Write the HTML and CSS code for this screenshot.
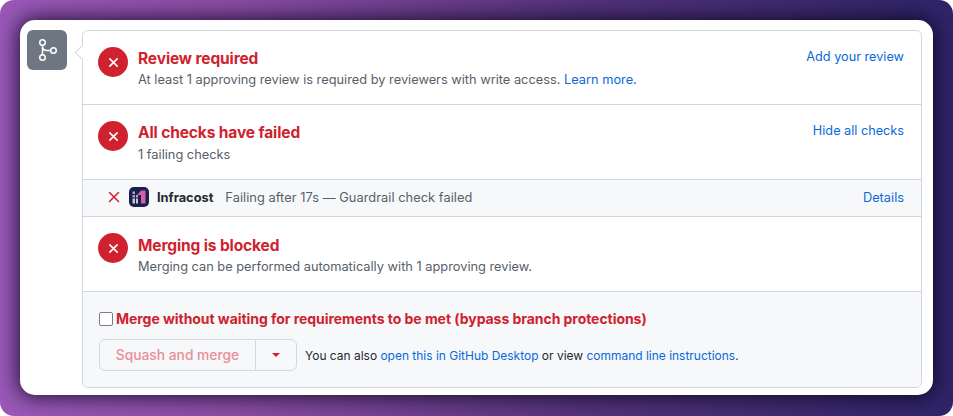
FILE: index.html
```html
<!DOCTYPE html>
<html lang="en">
<head>
<meta charset="utf-8">
<title>Merge box</title>
<link rel="stylesheet" href="styles.css">
</head>
<body>
<div class="frame">
  <div class="card">
    <div class="badge">
      <svg viewBox="0 0 24 24" width="24" height="24" fill="none" stroke="#fff" stroke-width="1.5"><circle cx="7.5" cy="4.5" r="2.75"/><circle cx="7.5" cy="19.5" r="2.75"/><circle cx="18.5" cy="12.5" r="2.75"/><path d="M7.5 7.25v9.5M7.5 8c0 3 2 4.5 4.5 4.5h3.75"/></svg>
    </div>
    <div class="box">
      <span class="caret"></span>
      <section class="row row-review">
        <span class="status"><svg viewBox="0 0 16 16" width="16" height="16"><path d="M3.5 3.5l9 9M12.5 3.5l-9 9" stroke="#fff" stroke-width="2" stroke-linecap="round"/></svg></span>
        <div class="info">
          <h3>Review required</h3>
          <p>At least 1 approving review is required by reviewers with write access. <a href="#">Learn more.</a></p>
        </div>
        <a class="side" href="#">Add your review</a>
      </section>
      <section class="row row-checks">
        <span class="status"><svg viewBox="0 0 16 16" width="16" height="16"><path d="M3.5 3.5l9 9M12.5 3.5l-9 9" stroke="#fff" stroke-width="2" stroke-linecap="round"/></svg></span>
        <div class="info">
          <h3>All checks have failed</h3>
          <p>1 failing checks</p>
        </div>
        <a class="side" href="#">Hide all checks</a>
      </section>
      <section class="check">
        <svg class="check-x" viewBox="0 0 12 12" width="12" height="12"><path d="M1.5 1.5l9 9M10.5 1.5l-9 9" stroke="#cf222e" stroke-width="1.5" stroke-linecap="round"/></svg>
        <svg class="logo" viewBox="0 0 20 20" width="20" height="20"><rect width="20" height="20" rx="5" fill="#1b1f4b"/><rect x="3.5" y="4.5" width="2.5" height="2.5" fill="#a9abc0"/><rect x="3.5" y="8" width="2.5" height="2.5" fill="#a9abc0"/><rect x="3.5" y="11.5" width="2.5" height="5" fill="#c6c7d6"/><rect x="7" y="8" width="2" height="2.5" fill="#a9abc0"/><rect x="7" y="11.5" width="2" height="5" fill="#c6c7d6"/><path d="M8.5 7.5L12 3.5h4.5v13h-4.5V8H8.5z" fill="#d25fa8"/></svg>
        <strong>Infracost</strong>
        <span class="check-text">Failing after 17s — Guardrail check failed</span>
        <a class="details" href="#">Details</a>
      </section>
      <section class="row row-merge">
        <span class="status"><svg viewBox="0 0 16 16" width="16" height="16"><path d="M3.5 3.5l9 9M12.5 3.5l-9 9" stroke="#fff" stroke-width="2" stroke-linecap="round"/></svg></span>
        <div class="info">
          <h3>Merging is blocked</h3>
          <p>Merging can be performed automatically with 1 approving review.</p>
        </div>
      </section>
      <section class="actions">
        <label class="bypass"><span class="checkbox"></span>Merge without waiting for requirements to be met (bypass branch protections)</label>
        <div class="merge-line">
          <div class="btn-group">
            <span class="btn-main">Squash and merge</span>
            <span class="btn-drop"><span class="tri"></span></span>
          </div>
          <p>You can also <a href="#">open this in GitHub Desktop</a> or view <a href="#">command line instructions</a>.</p>
        </div>
      </section>
    </div>
  </div>
</div>
</body>
</html>
```
FILE: styles.css
```css
* { box-sizing: border-box; }
html, body { margin: 0; height: 100%; background: #fff; }
body { font-family: Inter, "Liberation Sans", sans-serif; font-size: 12.8px; color: #57606a; overflow: hidden; }
a { color: #0969da; text-decoration: none; }
p, h3 { margin: 0; }

.frame {
  width: 953px; height: 416px; padding: 20px 20px 21px 20px;
  border-radius: 14px;
  background: linear-gradient(90deg, #9a58b8 0%, #8a4ca3 25%, #53327a 62%, #2e2468 100%);
  overflow: hidden;
}
.card {
  height: 375px; background: #fff; border-radius: 15px;
  padding: 10px 11px 7px 7px;
  display: flex; gap: 15px; align-items: flex-start;
  box-shadow: 0 0 20px 2px rgba(8, 6, 28, .85);
}
.badge {
  width: 40px; height: 40px; flex: none; border-radius: 6px; background: #6e7781;
  display: flex; align-items: center; justify-content: center;
}
.box {
  position: relative; flex: 1; height: 358px;
  border: 1px solid #d0d7de; border-radius: 6px;
  display: flex; flex-direction: column;
}
.caret {
  position: absolute; left: -6px; top: 16px; width: 11px; height: 11px;
  background: #fff; border-left: 1px solid #d0d7de; border-bottom: 1px solid #d0d7de;
  transform: rotate(45deg);
}
.row {
  position: relative; display: flex; align-items: flex-start; padding: 16px 17px 0 15px;
  border-bottom: 1px solid #d0d7de;
}
.row-review { height: 74px; }
.row-checks { height: 75px; }
.row-merge { height: 75px; }
.status {
  width: 30px; height: 30px; flex: none; border-radius: 50%; background: #cf222e;
  display: flex; align-items: center; justify-content: center; margin-right: 10px;
}
.status svg { width: 13px; height: 13px; }
.info { flex: 1; }
h3 { font-size: 15.5px; line-height: 20px; font-weight: 700; letter-spacing: -.12px; color: #cf222e; margin-top: 2px; }
.info p { line-height: 18px; margin-top: 2px; }
.row-checks .info p { margin-top: 3px; }
.row-merge h3 { margin-top: 3px; }
.side { margin-top: 1px; line-height: 18px; font-size: 12.7px; }
.check {
  height: 37px; display: flex; align-items: center; padding: 0 17px 2px 25px;
  background: #f6f8fa; border-bottom: 1px solid #d0d7de;
}
.check-x { margin-right: 9px; }
.logo { margin-right: 8px; }
.check strong { font-weight: 700; color: #24292f; margin-right: 12px; }
.check-text { flex: 1; letter-spacing: .05px; }
.actions { flex: 1; background: #f6f8fa; border-radius: 0 0 6px 6px; padding: 18px 16px 0; }
.bypass { display: flex; align-items: center; font-weight: 700; font-size: 14px; line-height: 18px; letter-spacing: -.05px; color: #cf222e; }
.checkbox {
  width: 14px; height: 14px; margin-right: 3px; background: #fff;
  border: 1.5px solid #7b7b8c; border-radius: 2px;
}
.merge-line { display: flex; align-items: center; margin-top: 11px; }
.btn-group {
  display: flex; height: 32px; width: 198px; border: 1px solid #d5d9de; border-radius: 6px; background: #f6f8fa;
}
.btn-main {
  width: 156px; font-size: 13.8px; font-weight: 500; color: #ea8f97; text-align: center; line-height: 30px;
  border-right: 1px solid #d5d9de;
}
.btn-drop { flex: 1; display: flex; align-items: center; justify-content: center; }
.tri { width: 0; height: 0; border: 4px solid transparent; border-top-color: #cf222e; border-bottom: 0; }
.merge-line p { margin-left: 8px; font-size: 11.97px; color: #24292f; }
```
